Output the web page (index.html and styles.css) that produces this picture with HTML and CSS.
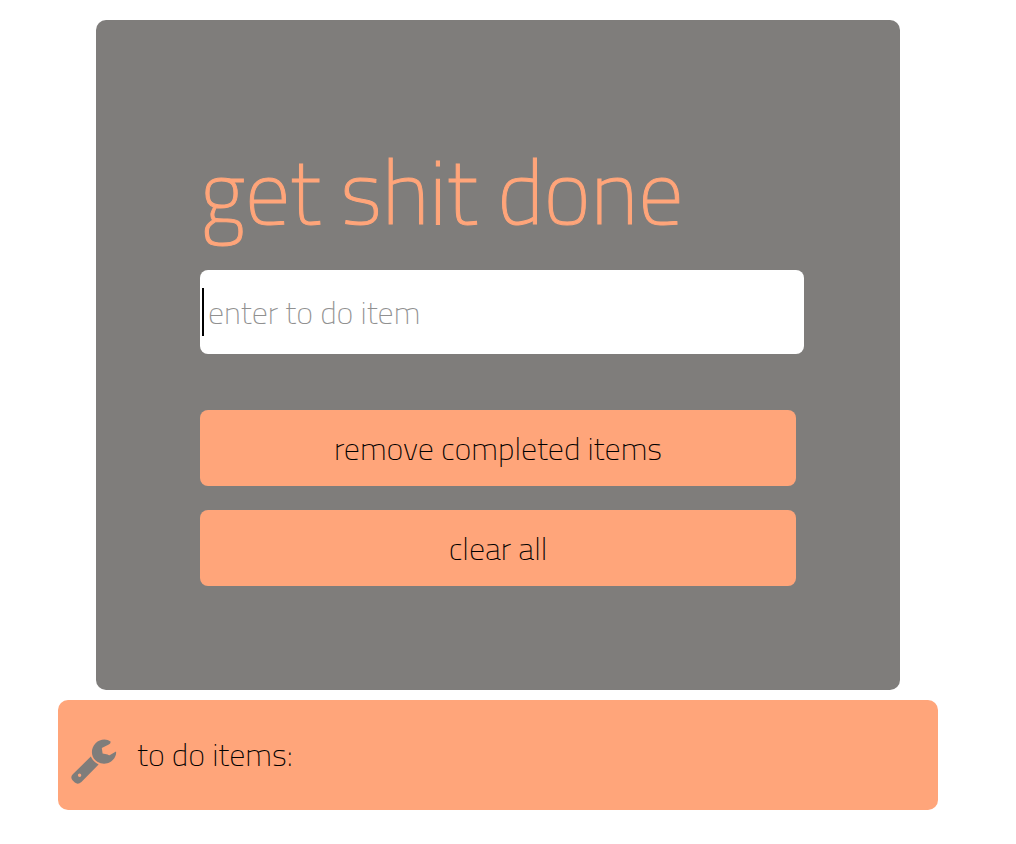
FILE: index.html
```html
<!DOCTYPE html>
<html lang="en">
<head>
<meta charset="utf-8">
<meta name="viewport" content="width=device-width, initial-scale=1">
<title>get shit done</title>
<link rel="stylesheet" href="styles.css">
</head>
<body>
<main class="page">
  <section class="panel">
    <h1 class="title">get shit done</h1>
    <div class="entry">
      <input class="entry-input" type="text" placeholder="enter to do item" aria-label="enter to do item">
      <span class="caret" aria-hidden="true"></span>
    </div>
    <div class="actions">
      <button class="action" type="button">remove completed items</button>
      <button class="action" type="button">clear all</button>
    </div>
  </section>
  <section class="todo">
    <svg class="wrench" viewBox="0 0 46 46" aria-hidden="true">
      <path fill="#7f7d7b" fill-rule="evenodd" d="M19.8 17.6Q22 22.6 27.6 25.4L10.4 43Q7 46.2 3.8 43.6L1.5 41.3Q-1 38 1.8 35.2ZM8.6 34.5A1.7 1.7 0 1 0 8.6 37.9A1.7 1.7 0 1 0 8.6 34.5Z"/>
      <path fill="#7f7d7b" d="M39.6 2.6C35.5-.6 28.8 0 24.6 4.2C19.8 9 19.6 16.6 24.4 21.2C29.2 26 37.6 25.8 42 20.8C44.4 18.2 45.6 14.8 45 12.4L39 16Q37.8 16.6 36.6 15.6L31.6 14.6L30.8 9L37.8 5.6Q39.8 4.4 39.6 2.6Z"/>
    </svg>
    <h2 class="todo-title">to do items:</h2>
  </section>
</main>
</body>
</html>
```
FILE: styles.css
```css
* {
  box-sizing: border-box;
}

body {
  margin: 20px 20px 0 0;
  background: #fff;
  color: #000;
  font-family: "Titillium Web", Roboto, sans-serif;
  font-size: 32px;
  font-weight: 200;
  line-height: 48px;
}

.page {
  display: flex;
  flex-direction: column;
  gap: 10px;
}

.panel {
  margin: 0 96px;
  padding: 104px;
  border-radius: 10px;
  background: #7f7d7b;
}

.title {
  margin: 0 0 12px;
  color: #ffa57a;
  font-size: 90px;
  font-weight: 200;
  line-height: 134px;
  white-space: nowrap;
  -webkit-text-stroke: 1px #ffa57a;
}

.entry {
  position: relative;
  margin-right: -8px;
}

.entry-input {
  display: block;
  width: 100%;
  padding: 18px 8px;
  border: 0;
  border-radius: 8px;
  background: #fff;
  color: #000;
  font: inherit;
}

.entry-input::placeholder {
  color: #909090;
  opacity: 1;
}

.caret {
  position: absolute;
  top: 18px;
  left: 2px;
  width: 2px;
  height: 48px;
  background: #000;
}

.actions {
  display: flex;
  flex-direction: column;
  gap: 24px;
  margin-top: 56px;
}

.action {
  padding: 14px;
  border: 0;
  border-radius: 8px;
  background: #ffa57a;
  color: #000;
  font: inherit;
}

.todo {
  display: flex;
  align-items: flex-start;
  gap: 20px;
  margin: 0 58px;
  padding: 30px 13px 25px;
  border-radius: 10px;
  background: #ffa57a;
}

.wrench {
  width: 46px;
  height: 46px;
  margin-top: 9px;
}

.todo-title {
  margin: 0;
  font-size: 32px;
  font-weight: 200;
}
```
